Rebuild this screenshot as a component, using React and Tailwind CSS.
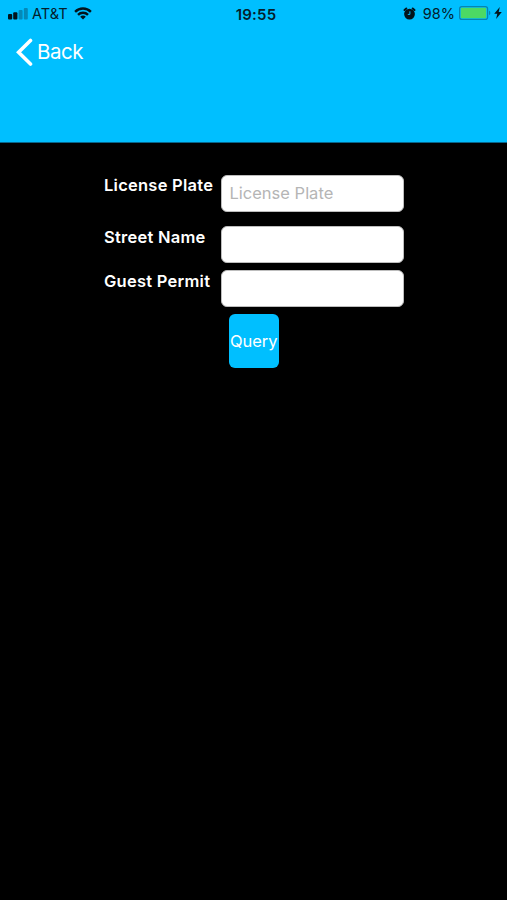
import React, { useState } from 'react';

const StatusBar = () => {
  return (
    <div className="grid grid-cols-3 items-center h-7 pl-2 pr-[5px] text-[#04202c]">
      {/* Carrier */}
      <div className="flex items-center">
        <svg width="20" height="12" viewBox="0 0 20 12" className="shrink-0">
          <rect x="0" y="6" width="4.2" height="5.5" rx="1" fill="#03141c" />
          <rect x="5.2" y="4.3" width="4.2" height="7.2" rx="1" fill="#03141c" />
          <rect x="10.6" y="2.1" width="4" height="9.4" rx="1" fill="#0489b8" />
          <rect x="15.8" y="0" width="4" height="11.5" rx="1" fill="#0489b8" />
        </svg>
        <span className="ml-1 w-9 whitespace-nowrap text-[14.5px] leading-none">AT&amp;T</span>
        <svg width="18" height="13" viewBox="0 0 18 13" className="relative -top-px ml-1.5 shrink-0" fill="none" stroke="#03141c" strokeWidth="2.4">
          <path d="M1.1 4.8C5.5.4 12.5.4 16.9 4.8" />
          <path d="M4 7.8C6.800 5 11.2 5 14 7.8" />
          <path d="M9 12.6L6.2 9.8C7.8 8.2 10.2 8.2 11.8 9.8Z" fill="#03141c" stroke="none" />
        </svg>
      </div>

      <span className="pl-0.5 text-center text-[15px] leading-none font-semibold tracking-[0.2px]">19:55</span>

      {/* Battery */}
      <div className="flex items-center justify-end">
        <svg width="13" height="13" viewBox="0 0 13 13" className="relative -top-px shrink-0">
          <circle cx="6.5" cy="7.1" r="5.4" fill="#03141c" />
          <path d="M1.5 3L3.300 1.500M11.5 3L9.700 1.500" stroke="#03141c" strokeWidth="2" strokeLinecap="round" />
          <path d="M6.9 4.300V7.400L4.800 7.400" stroke="#00bfff" strokeWidth="1" fill="none" />
        </svg>
        <span className="ml-[7px] text-[14.5px] leading-none">98%</span>
        <svg width="32" height="14" viewBox="0 0 32 14" className="relative -top-px ml-1 shrink-0">
          <rect x="0.6" y="0.6" width="28" height="12.8" rx="2.2" fill="none" stroke="#0784b0" strokeWidth="1.2" />
          <rect x="1.8" y="1.8" width="25.4" height="10.4" rx="1" fill="#4cd964" />
          <path d="M30 4.8C31.8 5.3 31.8 8.7 30 9.2Z" fill="#0784b0" />
        </svg>
        <svg width="8" height="12" viewBox="0 0 8 12" className="relative -top-px ml-[3px] shrink-0">
          <path d="M5.8 0L.2 6.8H3.300L2.1 12L7.8 4.900H4.700Z" fill="#03141c" />
        </svg>
      </div>
    </div>
  );
};

const App = () => {
  const [formData, setFormData] = useState({
    licensePlate: '',
    streetName: '',
    guestPermit: '',
  });

  const handleChange = (e) => {
    const { name, value } = e.target;
    setFormData(prev => ({
      ...prev,
      [name]: value
    }));
  };

  const inputClass =
    'w-[183px] h-[36.5px] shrink-0 rounded-md border border-[#bdbdbd] bg-white px-[7.5px] pb-px text-[16.5px] text-black placeholder:text-[#b5b5b5] focus:outline-none';
  const labelClass = 'w-[117px] whitespace-nowrap text-[16.5px] leading-5 font-semibold tracking-[0.25px] text-white';

  return (
    <div className="h-[900px] w-full bg-black font-['Inter','Liberation_Sans',sans-serif]">
      <header className="h-[143px] border-b border-[#08668c] bg-[#00bfff]">
        <StatusBar />
        <button type="button" className="ml-4 mt-2.5 flex h-7 items-center text-white">
          <svg width="17" height="28" viewBox="0 0 17 28" fill="none" stroke="currentColor" strokeWidth="3.6">
            <path d="M14.5 2.5L2.6 14.3L14.5 26" strokeLinecap="round" />
          </svg>
          <span className="ml-1 mt-px text-[20.5px] leading-none tracking-[-0.5px]">Back</span>
        </button>
      </header>

      <form className="pl-[104px] pt-8" onSubmit={(e) => e.preventDefault()}>
        <div className="mb-[14.5px] flex">
          <label htmlFor="licensePlate" className={labelClass}>License Plate</label>
          <input
            id="licensePlate"
            name="licensePlate"
            value={formData.licensePlate}
            onChange={handleChange}
            placeholder="License Plate"
            className={inputClass}
          />
        </div>
        <div className="mb-[7.5px] flex">
          <label htmlFor="streetName" className={`${labelClass} pt-px`}>Street Name</label>
          <input
            id="streetName"
            name="streetName"
            value={formData.streetName}
            onChange={handleChange}
            className={inputClass}
          />
        </div>
        <div className="flex">
          <label htmlFor="guestPermit" className={`${labelClass} pt-px`}>Guest Permit</label>
          <input
            id="guestPermit"
            name="guestPermit"
            value={formData.guestPermit}
            onChange={handleChange}
            className={inputClass}
          />
        </div>
        <button
          type="submit"
          className="ml-[125px] mt-[7.5px] flex h-[54px] w-[49.5px] items-center justify-center rounded-md bg-[#00bfff] pt-px text-[16.5px] text-white"
        >
          Query
        </button>
      </form>
    </div>
  );
};

export default App;
